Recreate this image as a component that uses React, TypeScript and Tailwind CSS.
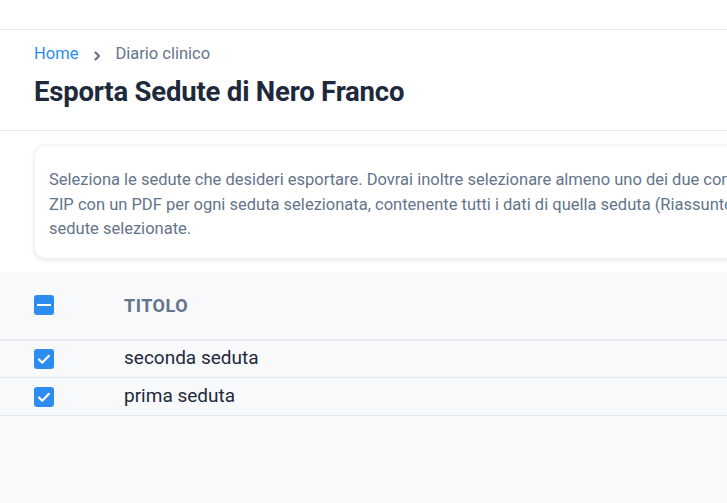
import { useState } from "react";

const sedute = [
  { id: 1, titolo: "seconda seduta" },
  { id: 2, titolo: "prima seduta" },
];

function Check({ mode }: { mode: "check" | "partial" }) {
  return (
    <span className="inline-flex w-5 h-5 items-center justify-center rounded-[3px] bg-[#2d8cf0]">
      {mode === "check" ? (
        <svg className="w-4 h-4" viewBox="0 0 16 16" fill="none" stroke="white" strokeWidth={2.2} strokeLinecap="round" strokeLinejoin="round">
          <path d="M3 8.5l3.2 3.2L13 4.8" />
        </svg>
      ) : (
        <span className="block w-[14px] h-[2px] bg-white" />
      )}
    </span>
  );
}

export default function App() {
  const [selected] = useState<number[]>([1, 2]);

  return (
    <div className="min-h-[503px] bg-[#f8f9fb] font-['Roboto',sans-serif] overflow-hidden">
      {/* barra superiore */}
      <div className="h-[30px] bg-white border-b border-[#e5e7eb] shadow-[0_1px_2px_rgba(0,0,0,0.05)]" />

      <div className="bg-white border-b border-[#e2e8f0] px-[34px] pt-[14px] h-[101px]">
        <nav className="flex items-center text-[16.5px] leading-5">
          <a className="text-[#2d8cf0]">Home</a>
          <svg className="w-3 h-3 ml-[13px] mr-[12px] mt-1 text-[#64748b]" viewBox="0 0 12 12" fill="none" stroke="currentColor" strokeWidth={2.2} strokeLinecap="round" strokeLinejoin="round">
            <path d="M4.5 2.5l3.5 3.5-3.5 3.5" />
          </svg>
          <span className="text-[#64748b]">Diario clinico</span>
        </nav>
        <h1 className="mt-[12px] text-[27.5px] leading-8 font-bold text-[#1e293b] tracking-[-0.2px]">Esporta Sedute di Nero Franco</h1>
      </div>

      <div className="bg-white px-[34px] pt-[14px] pb-[13px]">
        <div className="w-[900px] rounded-xl bg-white shadow-[0_1px_4px_rgba(15,23,42,0.12)] border border-[#f1f5f9] px-[14px] pt-[22px] pb-[16px]">
          <p className="text-[16.5px] leading-[24.5px] text-[#64748b] whitespace-nowrap">
            Seleziona le sedute che desideri esportare. Dovrai inoltre selezionare almeno uno dei due contenuti da esportare.
            <br />
            ZIP con un PDF per ogni seduta selezionata, contenente tutti i dati di quella seduta (Riassunto, note e allegati) per tutte le
            <br />
            sedute selezionate.
          </p>
        </div>
      </div>

      <table className="w-full border-collapse bg-[#f8f9fb]">
        <thead>
          <tr className="h-[68px] border-b border-[#e2e8f0] shadow-[0_1px_1px_rgba(0,0,0,0.04)]">
            <th className="w-[124px] pl-[34px] text-left align-middle">
              <div className="flex items-center">
                <Check mode="partial" />
              </div>
            </th>
            <th className="text-left text-[18px] font-bold tracking-[0.5px] text-[#64748b] uppercase">Titolo</th>
          </tr>
        </thead>
        <tbody>
          {sedute.map((s) => (
            <tr key={s.id} className="h-[38px] border-b border-[#e2e8f0]">
              <td className="pl-[34px]">
                <div className="flex items-center">
                  {selected.includes(s.id) && <Check mode="check" />}
                </div>
              </td>
              <td className="text-[19px] text-[#1e293b]">{s.titolo}</td>
            </tr>
          ))}
        </tbody>
      </table>
    </div>
  );
}
